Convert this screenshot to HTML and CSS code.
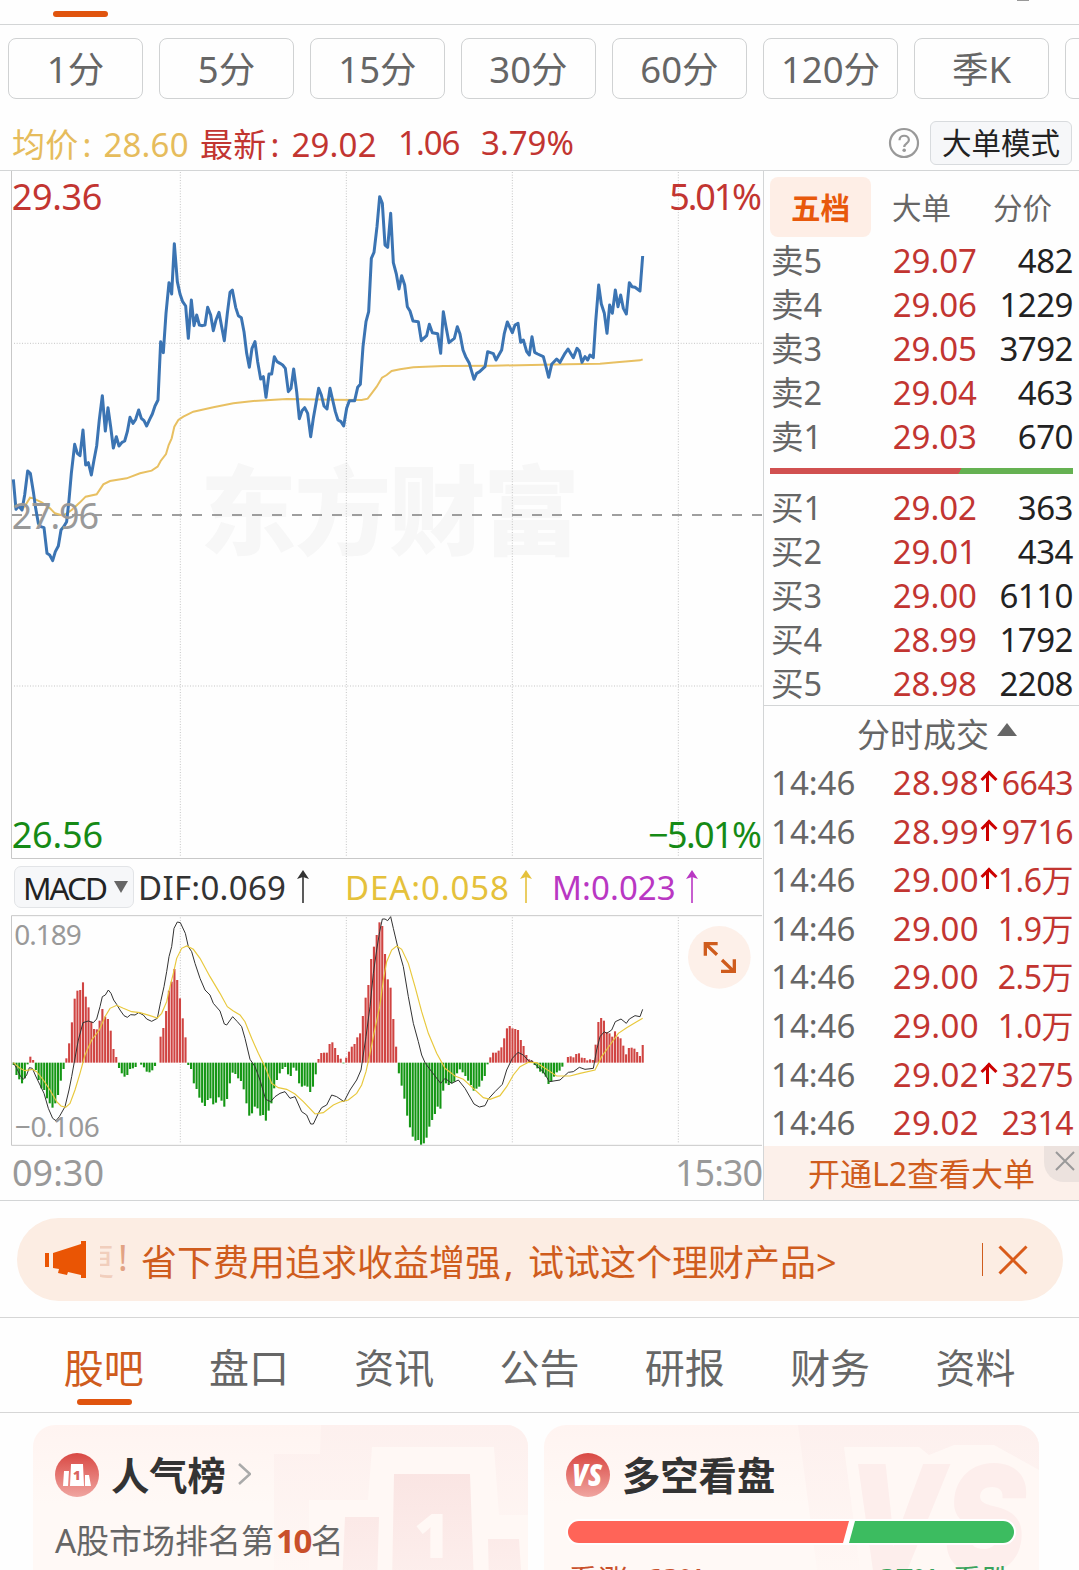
FILE: index.html
```html
<!DOCTYPE html>
<html lang="zh-CN">
<head>
  <meta charset="UTF-8" />
  <meta name="viewport" content="width=device-width, initial-scale=1.0" />
  <title>分时行情</title>
  <link rel="stylesheet" href="styles.css">
</head>
<body>

<div class="page">
  <div class="top-tabs"><span class="underline"></span><span class="top-mark"></span></div>

  <div class="periods">
    <button>1分</button>
    <button>5分</button>
    <button>15分</button>
    <button>30分</button>
    <button>60分</button>
    <button>120分</button>
    <button>季K</button>
    <button></button>
  </div>

  <div class="summary">
    <span class="avg">均价<i>:</i>28.60</span>
    <span class="last">最新<i>:</i>29.02</span>
    <span class="last change">1.06</span>
    <span class="last percent">3.79%</span>
    <svg class="help" width="32" height="32" viewBox="0 0 32 32">
      <circle cx="16" cy="16" r="14" />
      <path d="M11.5 13.2c0-6 9.4-5.800 9.400-.2 0 3.400-4.700 3.300-4.700 7" />
      <circle class="dot" cx="16.200" cy="23.300" r="1.800" />
    </svg>
    <button class="mode-btn">大单模式</button>
  </div>

  <div class="market">
    <div class="charts">
      <!-- price chart -->
      <svg class="price-chart" width="763" height="688" viewBox="0 3 2289 2064">
        <text class="watermark" x="600" y="1132" textLength="1140">东方财富</text>
        <g class="grid">
          <path d="M541 6V2062M1039 6V2062M1537 6V2062M2035 6V2062M42 520H2286M42 1548H2286" />
        </g>
        <path class="frame" d="M34.500 3V2065.500H2286" />
        <path class="base" d="M36 1035H2286" />
        <polyline class="avg-line" points="66,1020 80,1000 90,983 100,985 125,997 150,1015 165,1030 190,1037 215,1020 240,997 257,980 290,973 310,943 330,933 380,925 420,910 455,902 473,890 482,873 498,852 506,825 515,805 523,770 535,750 550,740 580,725 640,712 700,700 760,693 860,687 1000,689 1085,690 1103,686 1115,670 1130,650 1146,623 1160,615 1175,603 1200,598 1240,592 1330,588 1480,587 1700,583 1800,581 1850,577 1920,571 1928,568" />
        <text class="up" x="35" y="119" textLength="272">29.36</text>
        <text class="up" x="2008" y="119" textLength="278">5.01%</text>
        <text class="down" x="35" y="2035" textLength="274">26.56</text>
        <text class="down" x="1944" y="2035" textLength="342">−5.01%</text>
        <polyline class="price-line" points="40,928 48,1018 56,1008 66,1020 74,975 83,903 91,910 100,965 107,1015 115,1060 122,1070 132,1073 141,1150 149,1155 158,1172 166,1145 175,1128 183,1080 191,1070 200,1055 207,990 214,910 224,823 232,850 240,857 249,780 257,885 265,878 274,915 282,870 290,828 298,748 307,677 316,783 324,713 332,770 340,834 349,800 357,828 366,817 374,813 382,785 390,742 399,760 407,748 416,720 424,745 432,752 440,768 449,748 457,732 465,708 474,690 482,515 490,548 498,430 507,338 515,372 523,221 532,335 540,372 548,395 557,408 565,505 574,390 582,467 590,435 598,465 607,467 615,465 623,412 632,435 640,482 648,450 657,427 665,470 673,512 682,430 690,367 697,360 707,412 715,437 724,443 732,485 740,550 748,592 756,535 765,515 773,575 782,627 790,620 798,682 807,612 815,612 823,560 831,575 840,580 848,585 856,595 865,665 873,655 881,597 890,665 898,746 906,722 914,713 923,730 932,800 940,745 948,700 956,655 964,675 972,708 981,717 990,655 998,690 1006,725 1014,750 1023,755 1031,768 1040,715 1048,692 1064,692 1073,652 1081,643 1089,530 1098,455 1106,425 1114,265 1122,247 1131,170 1139,80 1147,100 1155,225 1163,232 1172,130 1180,278 1189,312 1197,357 1205,317 1214,345 1222,410 1230,423 1239,453 1255,455 1264,512 1280,497 1288,463 1297,488 1313,491 1322,550 1330,425 1338,470 1347,518 1363,505 1372,470 1380,492 1389,540 1397,560 1408,580 1422,628 1430,610 1439,605 1455,590 1463,545 1480,551 1488,570 1505,540 1513,490 1522,456 1537,488 1545,465 1554,460 1562,517 1570,510 1580,545 1588,555 1596,500 1604,547 1613,552 1630,560 1638,590 1646,622 1655,583 1670,567 1680,577 1695,550 1704,537 1720,563 1731,535 1738,543 1746,577 1755,560 1763,570 1770,555 1780,563 1787,455 1796,345 1804,402 1813,430 1821,490 1829,405 1837,430 1846,360 1854,410 1862,375 1870,415 1879,432 1888,338 1896,350 1905,352 1920,363 1928,258" />
        <text class="mid" x="35" y="1078" textLength="262">27.96</text>
      </svg>

      <div class="macd-bar">
        <button class="macd-btn">MACD<i></i></button>
        <span class="dif">DIF:0.069</span>
        <svg class="thin-arrow" width="12" height="34" viewBox="0 0 12 34"><path d="M6 33V6" /><path class="head" d="M6 0L12 9L6 7L0 9Z" /></svg>
        <span class="dea">DEA:0.058</span>
        <svg class="thin-arrow dea" width="12" height="34" viewBox="0 0 12 34"><path d="M6 33V6" /><path class="head" d="M6 0L12 9L6 7L0 9Z" /></svg>
        <span class="m">M:0.023</span>
        <svg class="thin-arrow m" width="12" height="34" viewBox="0 0 12 34"><path d="M6 33V6" /><path class="head" d="M6 0L12 9L6 7L0 9Z" /></svg>
      </div>

      <!-- MACD chart, bars are added by script.js -->
      <svg class="macd-chart" width="763" height="231" viewBox="0 285 2289 693">
        <g class="grid"><path d="M541 292V972M1039 292V972M1537 292V972M2035 292V972" /></g>
        <path class="frame" d="M2286 287H34.500V976H2286" />
        <g id="bars"></g>
        <polyline class="dif-line" points="40,728 50,745 62,770 70,778 80,765 88,743 97,745 107,768 120,795 132,820 145,865 158,895 168,902 178,890 195,860 207,810 215,770 224,720 235,660 249,608 265,603 280,608 290,597 300,560 307,530 316,525 325,510 333,520 341,540 350,553 360,570 372,587 382,592 392,584 405,585 416,578 430,585 440,597 455,604 472,595 482,545 492,500 500,455 507,410 515,380 522,325 532,306 541,308 556,340 565,380 575,395 585,430 600,475 615,510 630,525 640,550 660,573 673,612 680,615 698,590 712,605 725,620 735,655 750,718 765,740 780,780 797,838 812,845 825,830 840,820 855,815 870,835 885,830 905,875 920,885 932,912 940,912 955,880 965,863 980,855 995,825 1010,830 1032,845 1050,810 1070,780 1083,750 1098,650 1110,560 1120,460 1130,390 1139,335 1147,297 1155,297 1163,302 1172,290 1180,325 1193,380 1210,440 1225,530 1240,610 1255,665 1265,705 1276,730 1295,755 1322,790 1335,775 1355,790 1375,780 1395,805 1422,852 1438,861 1455,857 1465,837 1485,815 1507,793 1520,750 1537,715 1554,697 1570,705 1588,725 1596,722 1610,738 1630,755 1648,785 1680,780 1705,757 1720,755 1738,742 1755,748 1780,745 1790,690 1800,650 1813,635 1820,640 1835,630 1846,605 1863,597 1879,610 1888,597 1905,587 1920,590 1928,568" />
        <polyline class="dea-line" points="40,728 60,745 75,752 97,748 110,755 130,780 150,810 170,845 183,858 197,862 210,850 225,810 240,760 255,705 275,660 298,630 315,590 330,565 350,556 370,565 395,575 420,578 450,587 472,594 485,580 500,545 510,500 520,460 530,415 545,385 560,378 580,388 600,415 630,470 660,520 682,560 700,573 720,585 735,605 755,655 775,700 797,745 815,790 835,803 860,808 885,822 910,845 945,882 970,878 1000,855 1020,846 1045,840 1070,820 1085,795 1098,755 1110,700 1122,640 1139,560 1150,480 1160,425 1175,390 1190,378 1205,388 1225,430 1245,500 1265,575 1285,640 1310,700 1335,745 1365,768 1390,778 1420,805 1450,833 1470,838 1500,827 1520,800 1540,765 1560,740 1585,727 1610,728 1635,745 1670,768 1710,768 1740,760 1785,750 1805,710 1830,675 1855,640 1880,623 1905,608 1928,595" />
        <text class="scale" x="43" y="374" textLength="202">0.189</text>
        <text class="scale" x="45" y="950" textLength="254">−0.106</text>
        <circle class="expand" cx="2158" cy="412" r="94" />
        <path class="expand-icon" d="M2151 404L2117 372M2116 407V371H2153M2166 420L2202 455M2203 418V454H2163" />
      </svg>

      <div class="times"><span>09:30</span><span>15:30</span></div>
    </div>

    <div class="side">
      <div class="side-tabs"><b>五档</b><span>大单</span><span>分价</span></div>
      <div class="levels">
        <div><span>卖5</span><em>29.07</em><strong>482</strong></div>
        <div><span>卖4</span><em>29.06</em><strong>1229</strong></div>
        <div><span>卖3</span><em>29.05</em><strong>3792</strong></div>
        <div><span>卖2</span><em>29.04</em><strong>463</strong></div>
        <div><span>卖1</span><em>29.03</em><strong>670</strong></div>
      </div>
      <div class="ratio"></div>
      <div class="levels">
        <div><span>买1</span><em>29.02</em><strong>363</strong></div>
        <div><span>买2</span><em>29.01</em><strong>434</strong></div>
        <div><span>买3</span><em>29.00</em><strong>6110</strong></div>
        <div><span>买4</span><em>28.99</em><strong>1792</strong></div>
        <div><span>买5</span><em>28.98</em><strong>2208</strong></div>
      </div>
      <div class="deals-title">分时成交<i></i></div>
      <div class="deals">
        <div><span>14:46</span><em>28.98</em><i class="rise"></i><strong>6643</strong></div>
        <div><span>14:46</span><em>28.99</em><i class="rise"></i><strong>9716</strong></div>
        <div><span>14:46</span><em>29.00</em><i class="rise"></i><strong>1.6万</strong></div>
        <div><span>14:46</span><em>29.00</em><i></i><strong>1.9万</strong></div>
        <div><span>14:46</span><em>29.00</em><i></i><strong>2.5万</strong></div>
        <div><span>14:46</span><em>29.00</em><i></i><strong>1.0万</strong></div>
        <div><span>14:46</span><em>29.02</em><i class="rise"></i><strong>3275</strong></div>
        <div><span>14:46</span><em>29.02</em><i></i><strong>2314</strong></div>
      </div>
      <div class="level2">
        开通L2查看大单
        <span class="level2-close"><svg width="22" height="22" viewBox="0 0 22 22"><path d="M2 2L20 20M20 2L2 20" /></svg></span>
      </div>
    </div>
  </div>

  <div class="notice-wrap">
    <div class="notice">
      <svg class="horn" width="42" height="38" viewBox="0 0 42 38">
        <path d="M0 12h4v14H0zM8 12L36 3V0h5v37h-5v-3l-13-3-1 3-9-2 1-4-6-1z" />
      </svg>
      <span class="old"><i>更</i>!</span>
      <span class="msg">省下费用追求收益增强<i>,</i>试试这个理财产品&gt;</span>
      <span class="bar"></span>
      <svg class="close" width="30" height="30" viewBox="0 0 30 30"><path d="M1.500 1.500L28.500 28.500M28.500 1.500L1.500 28.500" /></svg>
    </div>
  </div>

  <div class="tabs">
    <a class="active">股吧</a>
    <a>盘口</a>
    <a>资讯</a>
    <a>公告</a>
    <a>研报</a>
    <a>财务</a>
    <a>资料</a>
  </div>

  <div class="cards">
    <div class="card">
      <svg class="card-bg" width="495" height="160" viewBox="0 0 495 160">
        <defs>
          <linearGradient id="fade" x1="0" y1="0" x2="0" y2="1"><stop offset="0" stop-color="#fdf0ee" /><stop offset="1" stop-color="#fff8f5" /></linearGradient>
          <linearGradient id="block" x1="0" y1="0" x2="0" y2="1"><stop offset="0" stop-color="#fae5e3" /><stop offset="1" stop-color="#fdefed" /></linearGradient>
          <linearGradient id="badge" x1="0" y1="0" x2="0" y2="1"><stop offset="0" stop-color="#d94843" /><stop offset="1" stop-color="#f0a5a0" /></linearGradient>
        </defs>
        <path fill="url(#fade)" d="M288 0H495V160H241V29H287z" />
        <path fill="#fff8f5" d="M339 22H461L466 90H495V160H276V75H335z" />
        <path fill="url(#block)" d="M361 49H437L441 160H359zM312 92H346L344 160H309zM455 114H486L489 160H456z" />
        <text class="bg-one" x="381" y="133">1</text>
      </svg>
      <div class="card-title">
        <svg width="44" height="44" viewBox="0 0 44 44">
          <circle cx="22" cy="22" r="22" fill="url(#badge)" />
          <path fill="#fff" d="M9 18h5l-1 15H8zM16 11h12l1 22H15zM30 22h4l2 11h-6z" />
          <text class="badge-one" x="18" y="27">1</text>
        </svg>
        <h3>人气榜</h3>
        <svg class="chevron" width="13" height="22" viewBox="0 0 13 22"><path d="M1 1L12 11L1 21" /></svg>
      </div>
      <p>A股市场排名第<b>10</b>名</p>
    </div>

    <div class="card">
      <svg class="card-bg" width="495" height="160" viewBox="0 0 495 160">
        <path fill="url(#fade)" d="M254 0H495V160H275z" />
        <path fill="#fff8f5" d="M300 22H375L385 30L410 20H450L495 45V160H318z" />
        <text class="bg-vs" x="302" y="147" textLength="180" lengthAdjust="spacingAndGlyphs">VS</text>
      </svg>
      <div class="card-title">
        <svg width="44" height="44" viewBox="0 0 44 44">
          <circle cx="22" cy="22" r="22" fill="url(#badge)" />
          <text class="badge-vs" x="6" y="33" textLength="30" lengthAdjust="spacingAndGlyphs">VS</text>
        </svg>
        <h3>多空看盘</h3>
      </div>
      <div class="poll"><span></span><span></span></div>
      <div class="poll-text"><span>看涨 <b>63%</b></span><span class="bear"><b>37%</b> 看跌</span></div>
    </div>
  </div>
</div>

<script src="script.js"></script>
</body>
</html>
```

FILE: styles.css
```css
* { box-sizing: border-box; }
body {
  margin: 0; background: #fefefe; color: #666;
  font-family: "Noto Sans", "Noto Sans CJK SC", sans-serif;
}
button { font-family: inherit; padding: 0; }
i, em { font-style: normal; }
svg { display: block; flex: none; }
.page { width: 1079px; height: 1570px; overflow: hidden; }

.top-tabs {
  height: 25px; border-bottom: 1px solid #d3d5d6;
  display: flex; justify-content: space-between; padding: 0 50px 0 53px;
}
.underline { width: 55px; height: 6px; margin-top: 11px; border-radius: 3px; background: #e0540e; }
.top-mark { width: 12px; height: 1px; background: #999; }

.periods { display: flex; gap: 16px; padding: 13px 0 0 8px; height: 90px; }
.periods button {
  flex: none; width: 135px; height: 61px; background: #fefefe;
  border: 1.5px solid #d0d2d3; border-radius: 8px;
  color: #666; font-size: 36.5px; line-height: 58px;
}

.summary {
  display: flex; align-items: center; height: 56px; padding: 0 7px 0 12px;
  border-bottom: 1px solid #d3d5d6; font-size: 33px; white-space: nowrap;
}
.summary i { display: inline-block; width: 25px; padding-left: 4px; }
.avg { color: #e6bc5c; width: 188px; }
.last { color: #c23531; width: 198px; }
.avg, .last { letter-spacing: 0.2px; }
.change { width: 83px; letter-spacing: -1px; }
.percent { width: 407px; letter-spacing: 0; }
.help { fill: none; stroke: #999; stroke-width: 2.2; margin-right: 10px; }
.help .dot { fill: #999; stroke: none; }
.mode-btn {
  width: 142px; height: 44px; border: 1px solid #d8dbde; border-radius: 6px;
  background: #f6f7f9; color: #222; font-size: 29.5px; line-height: 42px;
}

.market { display: grid; grid-template-columns: 763px 316px; height: 1030px; border-bottom: 1px solid #d3d5d6; }

/* charts */
.grid path { fill: none; stroke: #bbb; stroke-width: 2.5; stroke-dasharray: 3 5; }
.frame { fill: none; stroke: #c8c8c8; stroke-width: 3; }
.base { stroke: #808080; stroke-width: 5; stroke-dasharray: 30 30; }
.price-line { fill: none; stroke: #3b74b3; stroke-width: 9; stroke-linejoin: round; }
.avg-line { fill: none; stroke: #e8c062; stroke-width: 6; }
.dif-line { fill: none; stroke: #333; stroke-width: 3; }
.dea-line { fill: none; stroke: #e8c83c; stroke-width: 3.5; }
.price-chart text { font-size: 108px; }
.price-chart .up { fill: #c23531; }
.price-chart .down { fill: #168a16; }
.price-chart .mid { fill: #999; }
.price-chart .watermark { fill: #f7f7f7; font-size: 290px; font-weight: 900; }
.macd-chart .scale { fill: #999; font-size: 84px; }
.bar-up { fill: #d04442; }
.bar-down { fill: #149614; }
.expand { fill: #fdf0e9; }
.expand-icon { fill: none; stroke: #cf5c1d; stroke-width: 10; }

.macd-bar { display: flex; align-items: center; height: 56px; padding-left: 14px; font-size: 33px; white-space: nowrap; }
.macd-btn {
  display: flex; align-items: center; width: 120px; height: 42px; padding-left: 8px; margin-right: 4px;
  border: 1px solid #e2e4e7; border-radius: 7px; background: #f6f7f9;
  color: #222; font-size: 31.5px; letter-spacing: -2px;
}
.macd-btn i { border: 7px solid transparent; border-top: 12px solid #666; border-bottom: 0; margin-left: 8px; }
.dif { color: #333; width: 159px; letter-spacing: 0.3px; }
.thin-arrow { stroke: #333; stroke-width: 1.6; fill: #333; }
.thin-arrow .head { stroke: none; }
span.dea { color: #e5c13b; width: 175px; margin-left: 36px; letter-spacing: 0.9px; }
svg.dea { stroke: #e5c13b; fill: #e5c13b; }
span.m { color: #b937c3; width: 134px; margin-left: 20px; letter-spacing: 0.1px; }
svg.m { stroke: #b937c3; fill: #b937c3; }
.times { display: flex; justify-content: space-between; padding: 0 1px 0 12px; color: #999; font-size: 36px; line-height: 54px; }
.times span:last-child { letter-spacing: -1px; }

/* order book */
.side { border-left: 1px solid #d3d5d6; }
.side-tabs { display: flex; padding: 6px 0 0 6px; height: 68px; font-size: 29.5px; line-height: 61px; text-align: center; }
.side-tabs b { width: 101px; height: 60px; background: #feeee6; border-radius: 8px; color: #e8590c; }
.side-tabs span { width: 101px; }
.levels { padding: 0 6px 0 7px; font-size: 33px; line-height: 44px; }
.levels div, .deals div { display: flex; white-space: nowrap; }
.levels span { width: 80px; font-size: 32.5px; }
.levels em { width: 126px; text-align: right; color: #c23531; }
.levels strong, .deals strong { flex: 1; text-align: right; font-weight: 400; }
.levels strong { color: #222; letter-spacing: -0.5px; }
.ratio { height: 6px; margin: 9px 6px 12px; background: linear-gradient(120deg, #d15050 62.500%, #65b152 62.600%); }
.levels + .deals-title { margin-top: -1px; }
.deals-title {
  display: flex; align-items: center; gap: 8px; padding-left: 93px;
  height: 54px; border-top: 1px solid #d3d5d6; font-size: 33px;
}
.deals-title i { border: 10px solid transparent; border-bottom: 13px solid #666; border-top: 0; margin-top: -6px; }
.deals { padding: 0 6px 0 7px; font-size: 33px; line-height: 48.6px; height: 387px; }
.deals span { width: 85px; }
.deals em { width: 123px; text-align: right; color: #c23531; letter-spacing: 0.4px; }
.deals strong { color: #c23531; letter-spacing: -0.5px; font-size: 32px; }
.deals i { width: 14px; margin-left: 1px; margin-right: -20px; position: relative; }
.rise::before { content: ""; position: absolute; left: 6px; top: 14px; width: 3px; height: 19px; background: #c00; }
.rise::after {
  content: ""; position: absolute; left: 3px; top: 14px; width: 9px; height: 9px;
  border: solid #c00; border-width: 3px 0 0 3px; transform: rotate(45deg);
}
.level2 { position: relative; height: 54px; background: #fcf0ea; color: #cf5c1d; font-size: 32px; line-height: 55px; text-align: center; }
.level2-close { position: absolute; right: 0; top: 0; width: 35px; height: 36px; padding: 4px 0 0 10px; background: #ece2de; border-bottom-left-radius: 20px; }
.level2-close svg { fill: none; stroke: #999; stroke-width: 2; }

/* notice */
.notice-wrap { height: 117px; padding: 17px 16px 0 17px; border-bottom: 1px solid #d6d6d6; }
.notice {
  display: flex; align-items: center; height: 83px; padding-left: 28px; border-radius: 42px;
  background: #fcede3; color: #cf5c1d; font-size: 36px; white-space: nowrap;
}
.horn { fill: #ea5504; }
.old { display: flex; width: 54px; padding-left: 13px; color: #e2a283; }
.old i { width: 14px; margin-right: 4px; overflow: hidden; direction: rtl; opacity: 0.4; }
.msg { width: 841px; padding-top: 2px; }
.msg i { display: inline-block; width: 27px; padding-left: 3px; }
.notice .bar { width: 1px; height: 33px; background: #cf5c1d; margin-right: 15px; }
.close { fill: none; stroke: #d95b1a; stroke-width: 3; }

.tabs { display: flex; height: 95px; padding-left: 31px; border-bottom: 1px solid #d6d6d6; }
.tabs a { position: relative; width: 145.3px; text-align: center; font-size: 40px; line-height: 99px; }
.tabs .active { color: #cf5c1d; }
.tabs .active::after { content: ""; position: absolute; left: 46px; top: 81px; width: 55px; height: 6px; border-radius: 3px; background: #e0540e; }

/* cards */
.cards { display: flex; gap: 16px; padding: 12px 0 0 33px; }
.card { position: relative; width: 495px; height: 160px; padding: 27px 25px 0 22px; border-radius: 22px 22px 0 0; background: linear-gradient(#fff4f1, #fff9f6 50%); overflow: hidden; }
.card-bg { position: absolute; left: 0; top: 0; }
.bg-one { fill: #fff8f5; font-size: 62px; font-weight: 900; }
.bg-vs { fill: #fdeeec; font-family: Inter, sans-serif; font-size: 148px; font-weight: 900; font-style: italic; }
.badge-one { fill: #d96560; font-size: 13px; font-weight: 900; }
.badge-vs { fill: #fff; font-family: "Open Sans", sans-serif; font-size: 30px; font-weight: 800; font-style: italic; }
.card-title { position: relative; display: flex; align-items: center; height: 46px; }
.card-title h3 { margin: 0 14px 0 12px; color: #333; font-size: 38.3px; line-height: 46px; font-weight: 700; white-space: nowrap; }
.chevron { fill: none; stroke: #aaa; stroke-width: 2.5; margin: -2px 0 0 -2px; }
.card p { position: relative; margin: 20px 0 0; font-size: 33px; line-height: 46px; white-space: nowrap; }
.card p b { color: #c9502a; letter-spacing: -1.5px; margin-left: 2px; }
.poll { position: relative; display: flex; width: 450px; height: 26px; margin: 21px 0 0; border: 2px solid #fff; border-radius: 13px; background: #fff; overflow: hidden; }
.poll span:first-child { width: 281px; background: #ff6458; clip-path: polygon(0 0, 100% 0, calc(100% - 6px) 100%, 0 100%); }
.poll span:last-child { flex: 1; background: #3cbc60; clip-path: polygon(6px 0, 100% 0, 100% 100%, 0 100%); }
.poll-text { position: relative; display: flex; justify-content: space-between; padding: 15px 2px 0; font-size: 30px; line-height: 40px; color: #c9502a; }
.poll-text span:first-child { word-spacing: 9px; }
.poll-text .bear { color: #3aa35c; word-spacing: 4px; }
```

FILE: script.js
```js
// MACD bar ends, one per minute; the zero line is at 728
const ends = [
  735,765,778,790,775,733,710,720,750,780,805,810,835,850,863,850,825,782,747,715,
  670,607,536,512,510,487,530,562,605,627,628,602,567,590,597,632,687,711,744,760,
  770,765,747,745,741,728,734,742,755,757,751,738,728,650,624,573,512,485,447,480,
  535,595,652,735,747,790,807,833,848,858,840,835,853,848,832,842,860,837,790,758,
  762,775,783,808,850,887,880,860,865,887,885,902,872,850,805,780,760,747,741,763,
  768,743,752,790,800,797,800,816,800,763,717,699,698,698,672,667,684,705,716,730,
  713,695,680,672,652,640,588,533,495,417,380,345,307,318,402,478,503,597,680,760,
  797,836,887,922,950,962,960,974,970,953,920,900,882,860,866,812,790,795,790,785,
  760,748,757,768,782,795,812,806,800,782,768,733,712,698,698,692,682,655,625,618,
  625,627,630,660,678,705,718,722,735,745,755,760,770,792,785,770,757,752,740,728,
  711,709,712,702,700,713,714,721,718,720,674,606,594,602,636,640,650,634,650,655,
  677,703,684,683,686,696,708,675
];
const zero = 728;
const step = (1928 - 41) / (ends.length - 1);
const bars = document.getElementById('bars');

ends.forEach((end, i) => {
  const rect = document.createElementNS('http://www.w3.org/2000/svg', 'rect');
  rect.setAttribute('x', 38 + i * step);
  rect.setAttribute('y', Math.min(end, zero));
  rect.setAttribute('width', 6.3);
  rect.setAttribute('height', Math.abs(end - zero));
  rect.setAttribute('class', end < zero ? 'bar-up' : 'bar-down');
  bars.appendChild(rect);
});
```
